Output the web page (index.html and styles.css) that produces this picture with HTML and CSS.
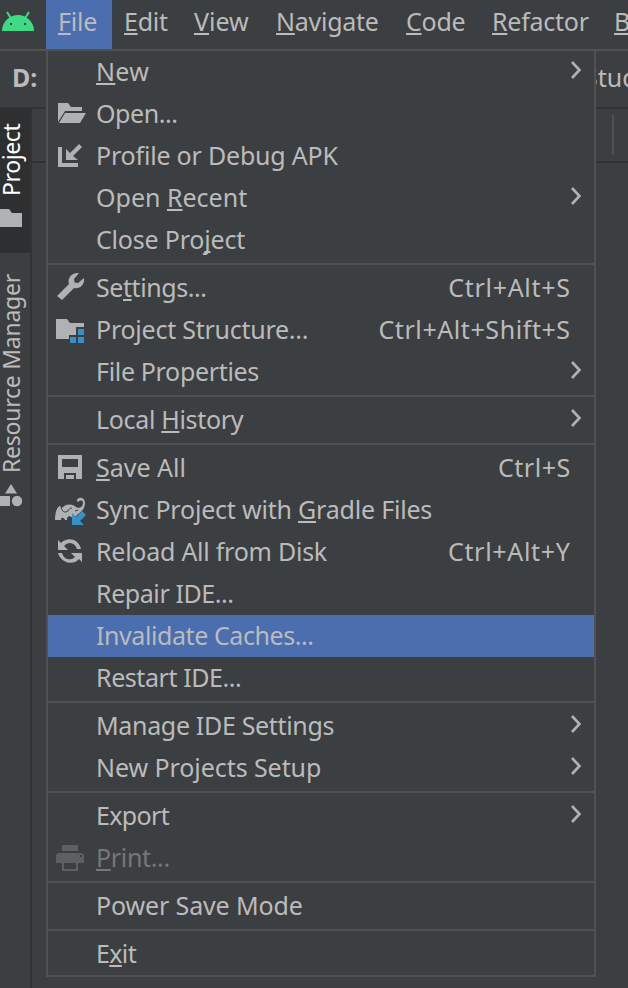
FILE: index.html
```html
<!DOCTYPE html>
<html lang="en">
<head>
<meta charset="utf-8">
<title>File menu</title>
<link rel="stylesheet" href="styles.css">
</head>
<body>
<div class="window">
  <header class="menubar">
    <svg class="logo" width="46" height="49" viewBox="0 0 46 49"><path d="M7 12l5 8M29 12l-5 8" stroke="#3ddc84" stroke-width="2"/><path d="M2 31a16 16 0 0 1 32 0z" fill="#3ddc84"/><path d="M10 23h2v2h-2zM24 23h2v2h-2z" fill="#3c3f41"/></svg>
    <span class="top top-file active"><u>F</u>ile</span>
    <span class="top top-edit"><u>E</u>dit</span>
    <span class="top top-view"><u>V</u>iew</span>
    <span class="top top-navigate"><u>N</u>avigate</span>
    <span class="top top-code"><u>C</u>ode</span>
    <span class="top top-refactor"><u>R</u>efactor</span>
    <span class="top"><u>B</u>uild</span>
  </header>
  <div class="crumbs"><b>D:</b><span>Studio</span></div>
  <div class="main">
    <aside class="strip">
      <div class="tab selected"><span class="vtext v-project">Project</span>
        <svg width="22" height="18" viewBox="0 0 22 18"><path d="M0 0h9l3 4h10v14H0z" fill="#afb1b3"/></svg></div>
      <div class="tab resource"><span class="vtext v-resource">Resource Manager</span>
        <svg width="22" height="23" viewBox="0 0 22 23"><path d="M11 0l6 9.5H5zM0 12h10v10H0z" fill="#afb1b3"/><circle cx="17" cy="17" r="5.2" fill="#afb1b3"/></svg></div>
    </aside>
    <div class="content"><div class="toolbar"><i></i></div></div>
  </div>

  <nav class="menu">
    <div class="item"><span class="label t-new"><u>N</u>ew</span><svg class="chev" width="12" height="20" viewBox="0 0 12 20"><path d="M2 2l7.5 8L2 18"/></svg></div>
    <div class="item"><svg class="icon" width="30" height="30" viewBox="0 0 30 30"><path d="M2 4h10l3 4h11v4H9l-7 11zM9 14h21l-6 10H3z"/></svg><span class="label t-open">Open...</span></div>
    <div class="item"><svg class="icon" width="30" height="30" viewBox="0 0 30 30"><path d="M2 6h4v16h16v4H2zM10 8l4 4 9-9 3 3-9 9 5 4H10z"/></svg><span class="label t-profile">Profile or Debug APK</span></div>
    <div class="item"><span class="label t-recent">Open <u>R</u>ecent</span><svg class="chev" width="12" height="20" viewBox="0 0 12 20"><path d="M2 2l7.5 8L2 18"/></svg></div>
    <div class="item"><span class="label t-close">Close Pro<u>j</u>ect</span></div>
    <hr>
    <div class="item"><svg class="icon" width="30" height="30" viewBox="0 0 30 30"><path d="M1 23L13 11C11 5 16-1 23 0l-5 6 .5 3.500 3.500.5L28 5c1 7-5 11.500-10 10L6 27z"/></svg><span class="label t-settings">Se<u>t</u>tings...</span><span class="key">Ctrl+Alt+S</span></div>
    <div class="item"><svg class="icon" width="30" height="30" viewBox="0 0 30 30"><path d="M0 4h11l3 4h14v4h-8v8h-7v4H0z"/><path class="blue" d="M22 14h6v6h-6zM14 22h6v6h-6zM22 22h6v6h-6z"/></svg><span class="label t-structure">Project Structure...</span><span class="key k-shift">Ctrl+Alt+Shift+S</span></div>
    <div class="item"><span class="label t-props">File Properties</span><svg class="chev" width="12" height="20" viewBox="0 0 12 20"><path d="M2 2l7.5 8L2 18"/></svg></div>
    <hr>
    <div class="item"><span class="label t-history">Local <u>H</u>istory</span><svg class="chev" width="12" height="20" viewBox="0 0 12 20"><path d="M2 2l7.5 8L2 18"/></svg></div>
    <hr>
    <div class="item"><svg class="icon" width="30" height="30" viewBox="0 0 30 30"><path fill-rule="evenodd" d="M2 2h24v24H2zM6 6v8h16V6zM8 26v-6h12v6zM10 22h8v4h-8z"/></svg><span class="label t-save"><u>S</u>ave All</span><span class="key k-save">Ctrl+S</span></div>
    <div class="item"><svg class="icon" width="30" height="30" viewBox="0 0 30 30"><path d="M-1 25C-1 17 1 12 4 11l2 2c4-5 11-4 14-1 3 2 7 0 7-4 0-3-3-3-5-1-2-1-1-3 1-4 4-1 6 2 6 5 0 6-4 9-7 11l-4 4-5-2-2 2v2H9c-1-3-4-3-4 0z"/><path d="M5 12c1 5 4 6 7 4 1-2 2-3 4-3M19 16l3-1" fill="none" stroke="#3c3f41"/><path class="blue" d="M16 30V18l4 4 6-6 4 4-6 6 4 4z"/></svg><span class="label t-sync">Sync Project with <u>G</u>radle Files</span></div>
    <div class="item"><svg class="icon" width="30" height="30" viewBox="0 0 30 30"><path d="M2 3l3 3C11 0 22 1 25 12h-4C19 5 12 4 8 9l4 4H2zM26 25l-3-3C17 29 5 26 2 16h4c2 7 9 8 13 4l-4-4h11z"/></svg><span class="label t-reload">Reload All from Disk</span><span class="key">Ctrl+Alt+Y</span></div>
    <div class="item"><span class="label t-repair">Repair IDE...</span></div>
    <div class="item highlighted"><span class="label t-invalidate">Invalidate Caches...</span></div>
    <div class="item"><span class="label t-restart">Restart IDE...</span></div>
    <hr>
    <div class="item"><span class="label t-manage">Manage IDE Settings</span><svg class="chev" width="12" height="20" viewBox="0 0 12 20"><path d="M2 2l7.5 8L2 18"/></svg></div>
    <div class="item"><span class="label t-setup">New Projects Setup</span><svg class="chev" width="12" height="20" viewBox="0 0 12 20"><path d="M2 2l7.5 8L2 18"/></svg></div>
    <hr>
    <div class="item"><span class="label t-export">Export</span><svg class="chev" width="12" height="20" viewBox="0 0 12 20"><path d="M2 2l7.5 8L2 18"/></svg></div>
    <div class="item disabled"><svg class="icon" width="30" height="30" viewBox="0 0 30 30"><path fill-rule="evenodd" d="M6 2h16v6H6zM2 10h24l2 2v8h-6v8H6v-8H0v-8zM8 20v6h12v-6zM24 12v2h2v-2z"/></svg><span class="label t-print"><u>P</u>rint...</span></div>
    <hr>
    <div class="item"><span class="label t-power">Power Save Mode</span></div>
    <hr>
    <div class="item"><span class="label t-exit">E<u>x</u>it</span></div>
  </nav>
</div>
</body>
</html>
```
FILE: styles.css
```css
* { box-sizing: border-box; }
body { margin: 0; background: #3c3f41; color: #bbb; font: 25px/40px "Noto Sans", sans-serif; }
.window { position: relative; width: 628px; height: 988px; overflow: hidden; display: flex; flex-direction: column; white-space: nowrap; }
u { text-decoration: underline 2px; text-underline-offset: 2px; text-decoration-skip-ink: none; }
.menubar { display: flex; flex: 0 0 51px; border-bottom: 2px solid #515151; letter-spacing: -0.25px; }
.logo { flex: none; }
.top { flex: none; padding: 1px 0 0 12px; }
.top-file { width: 66px; }
.top-edit { width: 70px; }
.top-view { width: 82px; letter-spacing: 0; }
.top-navigate { width: 130px; }
.top-code { width: 86px; }
.top-refactor { width: 122px; }
.active { background: #4b6eaf; }
.crumbs { display: flex; flex: 0 0 58px; padding: 6px 0 0 12px; border-bottom: 2px solid #323232; }
.crumbs b { flex: none; width: 572px; }
.main { display: flex; flex: 1; }
.strip { width: 32px; border-right: 2px solid #323232; }
.tab { display: flex; flex-direction: column; }
.selected { height: 144px; padding-top: 16px; background: #2d2f30; color: #fff; gap: 13px; }
.resource { padding-top: 21px; gap: 11px; }
.vtext { writing-mode: vertical-rl; transform: rotate(180deg); line-height: 30px; width: 26px; margin-left: -4px; font-size: 23px; }
.v-project { height: 71px; letter-spacing: -0.4px; }
.v-resource { height: 199px; letter-spacing: -0.25px; }
.content { flex: 1; }
.toolbar { display: flex; justify-content: flex-end; height: 54px; padding: 6px 14px 6px 0; border-bottom: 2px solid #323232; }
.toolbar i { width: 2px; background: #515151; }
.menu { position: absolute; left: 46px; top: 49px; width: 550px; height: 928px; border: 2px solid #515151; background: #3c3f41; }
.item { display: flex; height: 42px; padding: 0 24px 0 48px; justify-content: space-between; }
hr { margin: 2px 0; border: 0; height: 2px; background: #515151; }
.highlighted { background: #4b6eaf; }
.icon { flex: none; margin: 6px 10px 0 -40px; fill: #afb1b3; overflow: visible; }
.icon + .label { margin-right: auto; }
.blue { fill: #3592c4; }
.chev { margin: 9px -12px 0 0; fill: none; stroke: #afb1b3; stroke-width: 2.6; }
.disabled { color: #777; }
.disabled .icon { fill: #5d5f60; }
.key { letter-spacing: 0.7px; margin-right: -0.7px; }
.k-shift { letter-spacing: 0.58px; }
.k-save { letter-spacing: 0.5px; }
.t-new { letter-spacing: 0.3px; }
.t-profile, .t-close, .t-sync { letter-spacing: -0.2px; }
.t-structure, .t-reload { letter-spacing: -0.25px; }
.t-props, .t-history, .t-manage, .t-print { letter-spacing: -0.33px; }
.t-open, .t-settings, .t-repair, .t-invalidate, .t-restart { letter-spacing: -0.42px; }
.t-export, .t-exit { letter-spacing: -0.65px; }
.t-setup { letter-spacing: -0.07px; }
.t-power { letter-spacing: -0.13px; }
```
